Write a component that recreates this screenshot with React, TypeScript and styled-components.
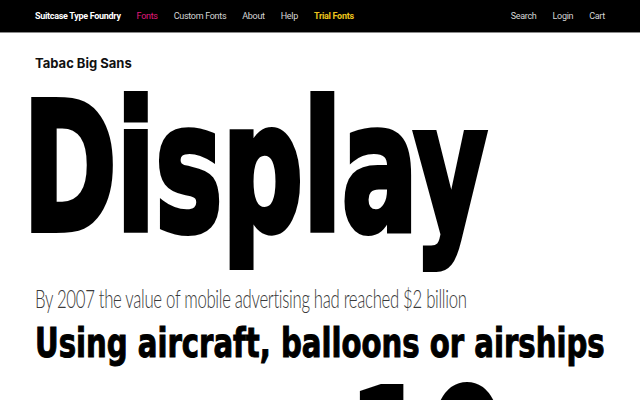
import styled, { createGlobalStyle } from "styled-components";

const GlobalStyle = createGlobalStyle`
  html, body {
    margin: 0;
    padding: 0;
    background: #fff;
    overflow: hidden;
  }
  body {
    font-family: "Liberation Sans", Arial, sans-serif;
  }
`;

const Page = styled.div`
  width: 640px;
  height: 400px;
  overflow: hidden;
`;

const NavBar = styled.nav`
  height: 32px;
  background: #000;
  border-bottom: 1px solid #8a8a8a;
  display: flex;
  align-items: center;
  justify-content: space-between;
  padding: 0 35px;
  font-family: Roboto, "Liberation Sans", sans-serif;
  font-size: 9px;
  letter-spacing: -0.3px;
`;

const NavGroup = styled.div`
  display: flex;
  align-items: center;
  gap: 16px;
`;

const NavLink = styled.a<{ $color?: string; $bold?: boolean }>`
  color: ${(p) => p.$color || "#d6d6d6"};
  font-weight: ${(p) => (p.$bold ? 700 : 400)};
  text-decoration: none;
  white-space: nowrap;
`;

const Content = styled.main`
  padding: 0 35px;
`;

const FontName = styled.h1`
  margin: 22px 0 0;
  font-family: Inter, "Liberation Sans", sans-serif;
  font-size: 13px;
  font-weight: 700;
  color: #111;
  line-height: 16px;
`;

const Specimen = styled.p<{
  $size: number;
  $line: number;
  $scale: number;
  $stroke?: number;
  $gapTop?: number;
  $shift?: number;
}>`
  margin: ${(p) => p.$gapTop || 0}px 0 0 ${(p) => p.$shift || 0}px;
  font-family: "DejaVu Sans Condensed", "DejaVu Sans", sans-serif;
  font-stretch: condensed;
  font-size: ${(p) => p.$size}px;
  font-weight: 700;
  line-height: ${(p) => p.$line}px;
  color: #000;
  white-space: nowrap;
  -webkit-text-stroke: ${(p) => p.$stroke || 0}px #000;
  transform: scaleX(${(p) => p.$scale});
  transform-origin: left center;
`;

const LightSpecimen = styled(Specimen)`
  font-family: Lato, "Open Sans", sans-serif;
  font-stretch: normal;
  font-weight: 300;
  letter-spacing: -0.5px;
  color: #3a3a3a;
  -webkit-text-stroke: 0;
`;

export default function App() {
  return (
    <Page>
      <GlobalStyle />
      <NavBar>
        <NavGroup>
          <NavLink $color="#fff" $bold>
            Suitcase Type Foundry
          </NavLink>
          <NavLink $color="#e01a7c">Fonts</NavLink>
          <NavLink>Custom Fonts</NavLink>
          <NavLink>About</NavLink>
          <NavLink>Help</NavLink>
          <NavLink $color="#ecc31c" $bold>
            Trial Fonts
          </NavLink>
        </NavGroup>
        <NavGroup>
          <NavLink>Search</NavLink>
          <NavLink>Login</NavLink>
          <NavLink>Cart</NavLink>
        </NavGroup>
      </NavBar>
      <Content>
        <FontName>Tabac Big Sans</FontName>
        <Specimen $size={179} $line={194} $scale={0.7} $stroke={6} $shift={-12}>
          Display
        </Specimen>
        <LightSpecimen $size={26} $line={40} $scale={0.645} $gapTop={13}>
          By 2007 the value of mobile advertising had reached $2 billion
        </LightSpecimen>
        <Specimen $size={40} $line={44} $scale={0.81} $stroke={1} $gapTop={3}>
          Using aircraft, balloons or airships
        </Specimen>
        <Specimen $size={179} $line={194} $scale={0.7} $stroke={6} $gapTop={-7} $shift={-8}>
          over 10
        </Specimen>
      </Content>
    </Page>
  );
}
